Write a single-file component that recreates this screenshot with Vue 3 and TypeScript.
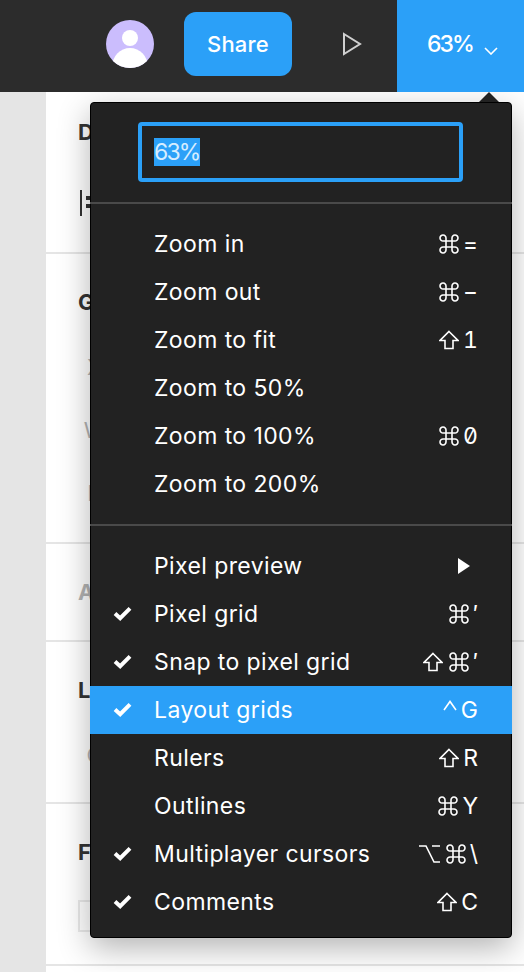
<script setup lang="ts">
type Sym = 'cmd' | 'shift' | 'opt' | 'ctrl'

interface Item {
  label: string
  keys?: string[]
  check?: boolean
  active?: boolean
  submenu?: boolean
}

const zoomItems: Item[] = [
  { label: 'Zoom in', keys: ['cmd', '='] },
  { label: 'Zoom out', keys: ['cmd', '−'] },
  { label: 'Zoom to fit', keys: ['shift', '1'] },
  { label: 'Zoom to 50%' },
  { label: 'Zoom to 100%', keys: ['cmd', '0'] },
  { label: 'Zoom to 200%' },
]

const viewItems: Item[] = [
  { label: 'Pixel preview', submenu: true },
  { label: 'Pixel grid', check: true, keys: ['cmd', '′'] },
  { label: 'Snap to pixel grid', check: true, keys: ['shift', 'cmd', '′'] },
  { label: 'Layout grids', check: true, active: true, keys: ['ctrl', 'G'] },
  { label: 'Rulers', keys: ['shift', 'R'] },
  { label: 'Outlines', keys: ['cmd', 'Y'] },
  { label: 'Multiplayer cursors', check: true, keys: ['opt', 'cmd', '\\'] },
  { label: 'Comments', check: true, keys: ['shift', 'C'] },
]

const groups: Item[][] = [zoomItems, viewItems]

const symbols: Record<Sym, { box: string; d: string; cls: string }> = {
  cmd: {
    box: '0 0 20 20',
    d: 'M7 7 H4.2 A3 3 0 1 1 7 4.2 V15.8 A3 3 0 1 1 4.2 13 H15.8 A3 3 0 1 1 13 15.8 V4.2 A3 3 0 1 1 15.8 7 Z',
    cls: 'sym-cmd',
  },
  shift: {
    box: '0 0 20 20',
    d: 'M10 1.5 L19 10.5 H14 V18.5 H6 V10.5 H1 Z',
    cls: 'sym-shift',
  },
  opt: {
    box: '0 0 21 20',
    d: 'M0 2 H7 L15 18 H21 M13 2 H21',
    cls: 'sym-opt',
  },
  ctrl: {
    box: '0 0 14 20',
    d: 'M1 10 L7 1.5 L13 10',
    cls: 'sym-ctrl',
  },
}

function symbol(key: string) {
  return symbols[key as Sym]
}
</script>

<template>
  <div class="page">
    <header class="topbar">
      <svg class="avatar" viewBox="0 0 48 48" aria-label="User">
        <defs>
          <clipPath id="avatar-clip"><circle cx="24" cy="24" r="24" /></clipPath>
        </defs>
        <g clip-path="url(#avatar-clip)">
          <rect width="48" height="48" fill="#cbbdfd" />
          <circle cx="24" cy="18" r="8" fill="#fff" />
          <ellipse cx="24" cy="47" rx="18" ry="19" fill="#fff" />
        </g>
      </svg>
      <button class="share">Share</button>
      <svg class="play" viewBox="0 0 20 24" aria-label="Present">
        <path d="M1 2 L17 12 L1 22 Z" fill="none" stroke="#d0d0d0" stroke-width="2" />
      </svg>
      <div class="zoom-button">
        <span class="zoom-value">63%</span>
        <svg class="chevron" viewBox="0 0 14 8">
          <path d="M1 1 L7 7 L13 1" fill="none" stroke="#fff" stroke-width="1.6" />
        </svg>
      </div>
    </header>

    <div class="workspace">
      <div class="canvas"></div>
      <aside class="panel">
        <section class="section first">
          <div class="heading">Design</div>
          <svg class="align" viewBox="0 0 14 26">
            <path d="M1 0 V26" stroke="#333" stroke-width="2" />
            <path d="M6 8 H12 M6 16 H12" stroke="#333" stroke-width="4" />
          </svg>
        </section>
        <section class="section grid">
          <div class="heading">Grid</div>
          <div class="field">X</div>
          <div class="field">W</div>
          <div class="field">B</div>
        </section>
        <section class="section short">
          <div class="heading muted">Auto layout</div>
        </section>
        <section class="section layer">
          <div class="heading">Layer</div>
          <div class="field">C</div>
        </section>
        <section class="section">
          <div class="heading">Fill</div>
          <div class="swatch"></div>
        </section>
      </aside>
    </div>

    <div class="menu">
      <span class="caret"></span>
      <div class="input-wrap">
        <div class="zoom-input"><span class="selected">63%</span></div>
      </div>
      <div v-for="(group, g) in groups" :key="g" class="group">
        <div
          v-for="item in group"
          :key="item.label"
          class="row"
          :class="{ active: item.active }"
        >
          <svg v-if="item.check" class="check" viewBox="0 0 20 16">
            <path d="M2 8 L7.5 13 L18 2.5" fill="none" stroke="#fff" stroke-width="4.2" />
          </svg>
          <span class="label">{{ item.label }}</span>
          <span v-if="item.keys" class="keys">
            <template v-for="k in item.keys" :key="k">
              <svg v-if="symbol(k)" class="sym" :class="symbol(k).cls" :viewBox="symbol(k).box" :aria-label="k">
                <path :d="symbol(k).d" fill="none" stroke="#fff" stroke-width="1.6" />
              </svg>
              <span v-else class="key">{{ k }}</span>
            </template>
          </span>
          <svg v-if="item.submenu" class="sub" viewBox="0 0 12 16">
            <path d="M0 0 L12 8 L0 16 Z" fill="#fff" />
          </svg>
        </div>
      </div>
    </div>
  </div>
</template>

<style>
html, body { margin: 0; background: #fff; }
</style>

<style scoped>
.page {
  position: relative;
  width: 524px;
  height: 972px;
  overflow: hidden;
  font-family: Inter, "Liberation Sans", sans-serif;
}
.topbar {
  position: relative;
  z-index: 2;
  box-sizing: border-box;
  height: 92px;
  padding-bottom: 4px;
  background: #2c2c2c;
  display: flex;
  align-items: center;
  justify-content: flex-end;
}
.avatar { width: 48px; height: 48px; margin-right: 30px; }
.share {
  width: 108px;
  height: 64px;
  border: 0;
  border-radius: 12px;
  background: #2ba0f8;
  color: #fff;
  font: 500 22px Inter, sans-serif;
  letter-spacing: 0.2px;
  margin-right: 51px;
  padding: 0;
}
.play { width: 20px; height: 24px; margin-right: 34px; }
.zoom-button {
  width: 127px;
  height: 92px;
  margin-bottom: -4px;
  background: #2ba0f8;
  color: #fff;
  font-size: 23px;
  font-weight: 500;
  display: flex;
  align-items: center;
  box-sizing: border-box;
  padding: 0 0 4px 30px;
}
.zoom-value { letter-spacing: -2px; }
.chevron { width: 14px; height: 8px; margin-left: 11px; margin-top: 13px; }

.workspace { display: flex; height: 880px; }
.canvas { width: 46px; background: #e5e5e5; }
.panel { flex: 1; background: #fff; }
.section {
  box-sizing: border-box;
  height: 162px;
  border-bottom: 2px solid #e5e5e5;
  padding-left: 32px;
}
.section.first .heading { padding-top: 24px; }
.section.grid { height: 290px; }
.section.short { height: 98px; }
.heading {
  padding-top: 32px;
  font-size: 22px;
  line-height: 32px;
  font-weight: 700;
  color: #333;
}
.heading.muted { color: #b3b3b3; }
.align { display: block; width: 14px; height: 26px; margin: 42px 0 0 2px; }
.field {
  width: 33px;
  height: 63px;
  line-height: 63px;
  font-size: 22px;
  text-align: center;
  color: #b3b3b3;
}
.grid .heading { margin-bottom: 18px; }
.layer .field { margin-top: 18px; }
.swatch {
  width: 80px;
  height: 32px;
  margin-top: 32px;
  box-sizing: border-box;
  border: 2px solid #e9e9e9;
}

.menu {
  position: absolute;
  z-index: 1;
  left: 90px;
  top: 102px;
  width: 422px;
  height: 836px;
  box-sizing: border-box;
  background: #222;
  border: 1px solid #000;
  border-radius: 4px;
  box-shadow: 0 10px 32px rgba(0, 0, 0, 0.3);
  color: #fff;
}
.caret {
  position: absolute;
  left: 388px;
  top: -11px;
  width: 0;
  height: 0;
  border-left: 10px solid transparent;
  border-right: 10px solid transparent;
  border-bottom: 10px solid #222;
}
.input-wrap {
  margin: 0 -1px;
  padding: 19px 49px 20px 48px;
  border-bottom: 2px solid #4a4a4a;
}
.zoom-input {
  height: 60px;
  box-sizing: border-box;
  border: 4px solid #2ba0f8;
  border-radius: 4px;
  padding: 12px 0 0 12px;
  font-size: 23px;
  line-height: 28px;
}
.selected {
  display: inline-block;
  background: #2ba0f8;
  color: #d6edff;
  letter-spacing: -1.8px;
}
.group { margin: 0 -1px; padding: 16px 0; }
.group + .group { border-top: 2px solid #4a4a4a; padding-bottom: 0; }
.row {
  position: relative;
  height: 48px;
  display: flex;
  align-items: center;
  padding: 0 34px 0 64px;
  font-size: 23px;
  letter-spacing: 0.4px;
}
.row.active { background: #2ba0f8; }
.check { position: absolute; left: 23px; top: 16px; width: 19px; height: 15px; }
.label { flex: 1; }
.keys { display: flex; align-items: center; gap: 4px; letter-spacing: 0; }
.key { font-feature-settings: "zero", "tnum"; }
.sym { display: block; flex: none; }
.sym + .sym { margin-left: 2px; }
.sym-cmd { width: 20px; height: 20px; }
.sym-shift { width: 20px; height: 20px; }
.sym-opt { width: 21px; height: 20px; }
.sym-ctrl { width: 14px; height: 20px; }
.sub { width: 12px; height: 16px; margin-right: 8px; }
</style>
